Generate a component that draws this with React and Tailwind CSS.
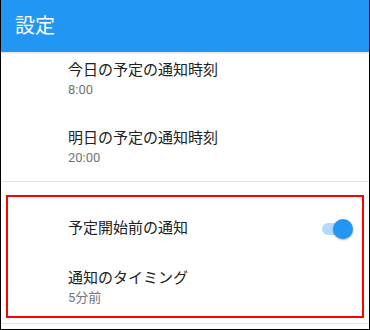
import React from "react";

const font = {
  fontFamily: 'Roboto, "Noto Sans CJK JP", sans-serif',
};

function Row({ title, sub, className = "" }) {
  return (
    <div className={className}>
      <p className="text-[15px] leading-[20px] text-[#212121]">{title}</p>
      {sub && (
        <p className="mt-[1px] text-[13px] leading-[18px] text-[#757575]">
          {sub}
        </p>
      )}
    </div>
  );
}

function Toggle() {
  return (
    <div className="relative w-[31px] h-[20px] flex items-center">
      <div className="w-[27px] h-[12px] rounded-full bg-[#b3dafc]" />
      <div className="absolute right-0 top-0 w-[20px] h-[20px] rounded-full bg-[#2196f3] shadow-[0_1px_2px_rgba(0,0,0,0.35)]" />
    </div>
  );
}

export default function App() {
  return (
    <div
      className="w-[370px] h-[330px] bg-white border-x border-b border-black overflow-hidden flex flex-col"
      style={font}
    >
      {/* Header */}
      <header className="h-[52px] shrink-0 bg-[#2196f3] flex items-center pl-[14px] shadow-[0_1px_2px_rgba(0,0,0,0.15)] relative z-10">
        <h1 className="text-[20px] text-white">設定</h1>
      </header>

      {/* Daily notification times */}
      <section className="pl-[67px] pt-[8px] h-[129px] shrink-0">
        <Row title="今日の予定の通知時刻" sub="8:00" />
        <Row title="明日の予定の通知時刻" sub="20:00" className="mt-[29px]" />
      </section>

      <div className="h-px shrink-0 bg-[#e3e3e3]" />

      {/* Highlighted group */}
      <div className="mx-[5px] mt-[13px] h-[123px] shrink-0 border-2 border-[#ff0000] pl-[60px] pr-[9px]">
        <div className="h-[63px] flex items-center justify-between">
          <p className="text-[15px] text-[#212121]">予定開始前の通知</p>
          <Toggle />
        </div>
        <Row title="通知のタイミング" sub="5分前" className="pt-[8px]" />
      </div>

      <div className="mt-[5px] h-px shrink-0 bg-[#e3e3e3]" />
    </div>
  );
}
